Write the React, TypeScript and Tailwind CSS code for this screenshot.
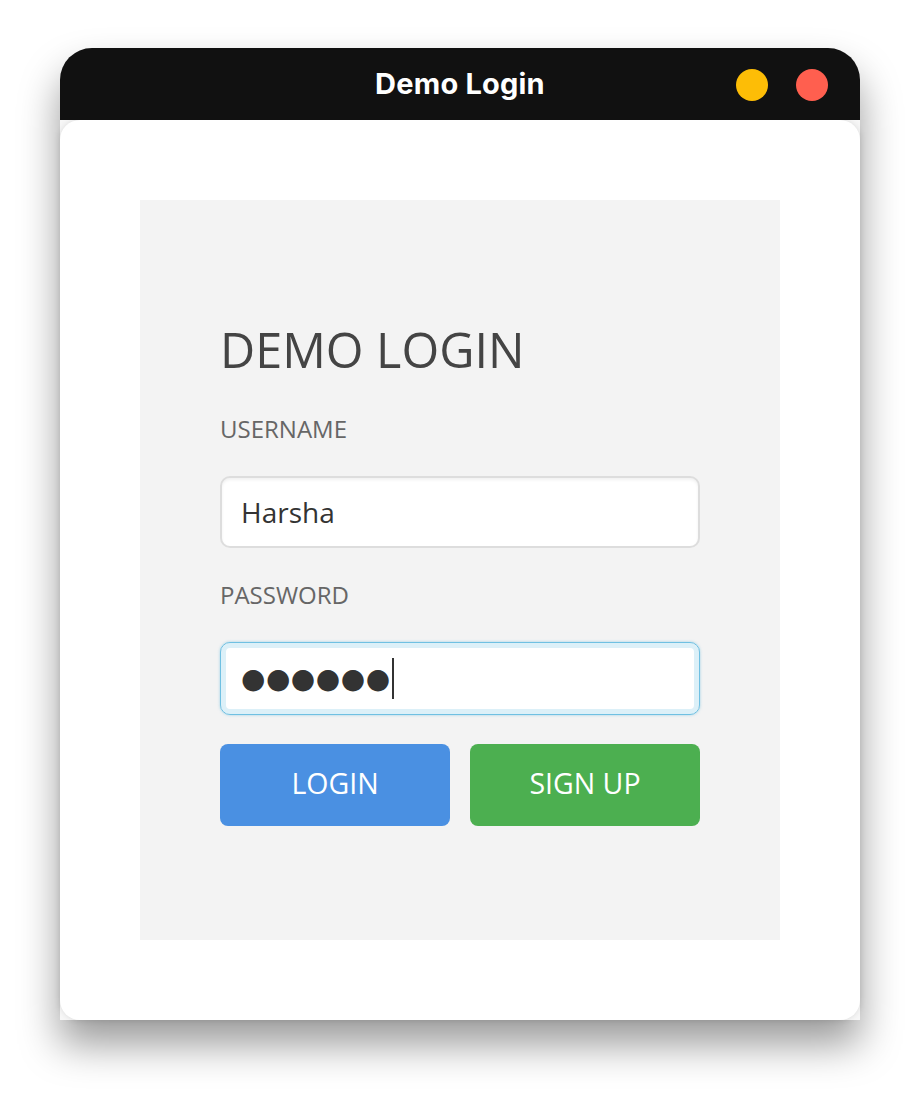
export default function App() {
  return (
    <div className="min-h-[1102px] w-[920px] bg-white pt-[48px]">
      <div className="ml-[60px] w-[800px] rounded-t-[32px] bg-[#f7f7f7] shadow-[0_24px_40px_rgba(0,0,0,0.4)]">
        {/* title bar */}
        <div className="relative flex h-[72px] items-center justify-center rounded-t-[32px] bg-[#111111]">
          <span className="font-['Inter',sans-serif] text-[29px] font-bold tracking-[0.2px] text-white">
            Demo Login
          </span>
          <div className="absolute right-[32px] top-[21px] flex gap-[28px]">
            <span className="h-[32px] w-[32px] rounded-full bg-[#fdbd06]" />
            <span className="h-[32px] w-[32px] rounded-full bg-[#ff5f4f]" />
          </div>
        </div>

        {/* body */}
        <div className="h-[900px] rounded-[20px] bg-white p-[80px] shadow-[0_0_6px_rgba(0,0,0,0.12)]">
          <div className="flex h-[740px] flex-col bg-[#f3f3f3] px-[80px] pt-[125px] font-['Open_Sans','Noto_Sans',sans-serif]">
            <h1 className="text-[48.5px] leading-[48px] text-[#444444]">DEMO LOGIN</h1>

            <label className="mt-[44px] text-[24px] leading-[24px] text-[#666666]">USERNAME</label>
            <div className="mt-[35px] flex h-[72px] items-center rounded-[10px] border-2 border-[#dddddd] bg-white px-[19px] text-[28px] text-[#333333] shadow-[inset_0_2px_3px_rgba(0,0,0,0.06)]">
              Harsha
            </div>

            <label className="mt-[35px] text-[24px] leading-[24px] text-[#666666]">PASSWORD</label>
            <div className="mt-[35px] flex h-[73px] items-center rounded-[10px] border border-[#6fc0e2] bg-white px-[20px] shadow-[inset_0_0_0_5px_#dcf0f8,0_0_3px_rgba(102,186,222,0.6)]">
              <span className="font-['DejaVu_Sans',sans-serif] text-[28px] leading-none tracking-[0.5px] text-[#333333]">
                ●●●●●●
              </span>
              <span className="ml-[1px] h-[41px] w-[2px] bg-[#333333]" />
            </div>

            <div className="mt-[29px] flex gap-[20px]">
              <button
                type="button"
                className="h-[82px] flex-1 rounded-[8px] bg-[#4a90e2] pb-[4px] text-[28.5px] text-white"
              >
                LOGIN
              </button>
              <button
                type="button"
                className="h-[82px] flex-1 rounded-[8px] bg-[#4caf50] pb-[4px] text-[28.5px] text-white"
              >
                SIGN UP
              </button>
            </div>
          </div>
        </div>
      </div>
    </div>
  );
}
